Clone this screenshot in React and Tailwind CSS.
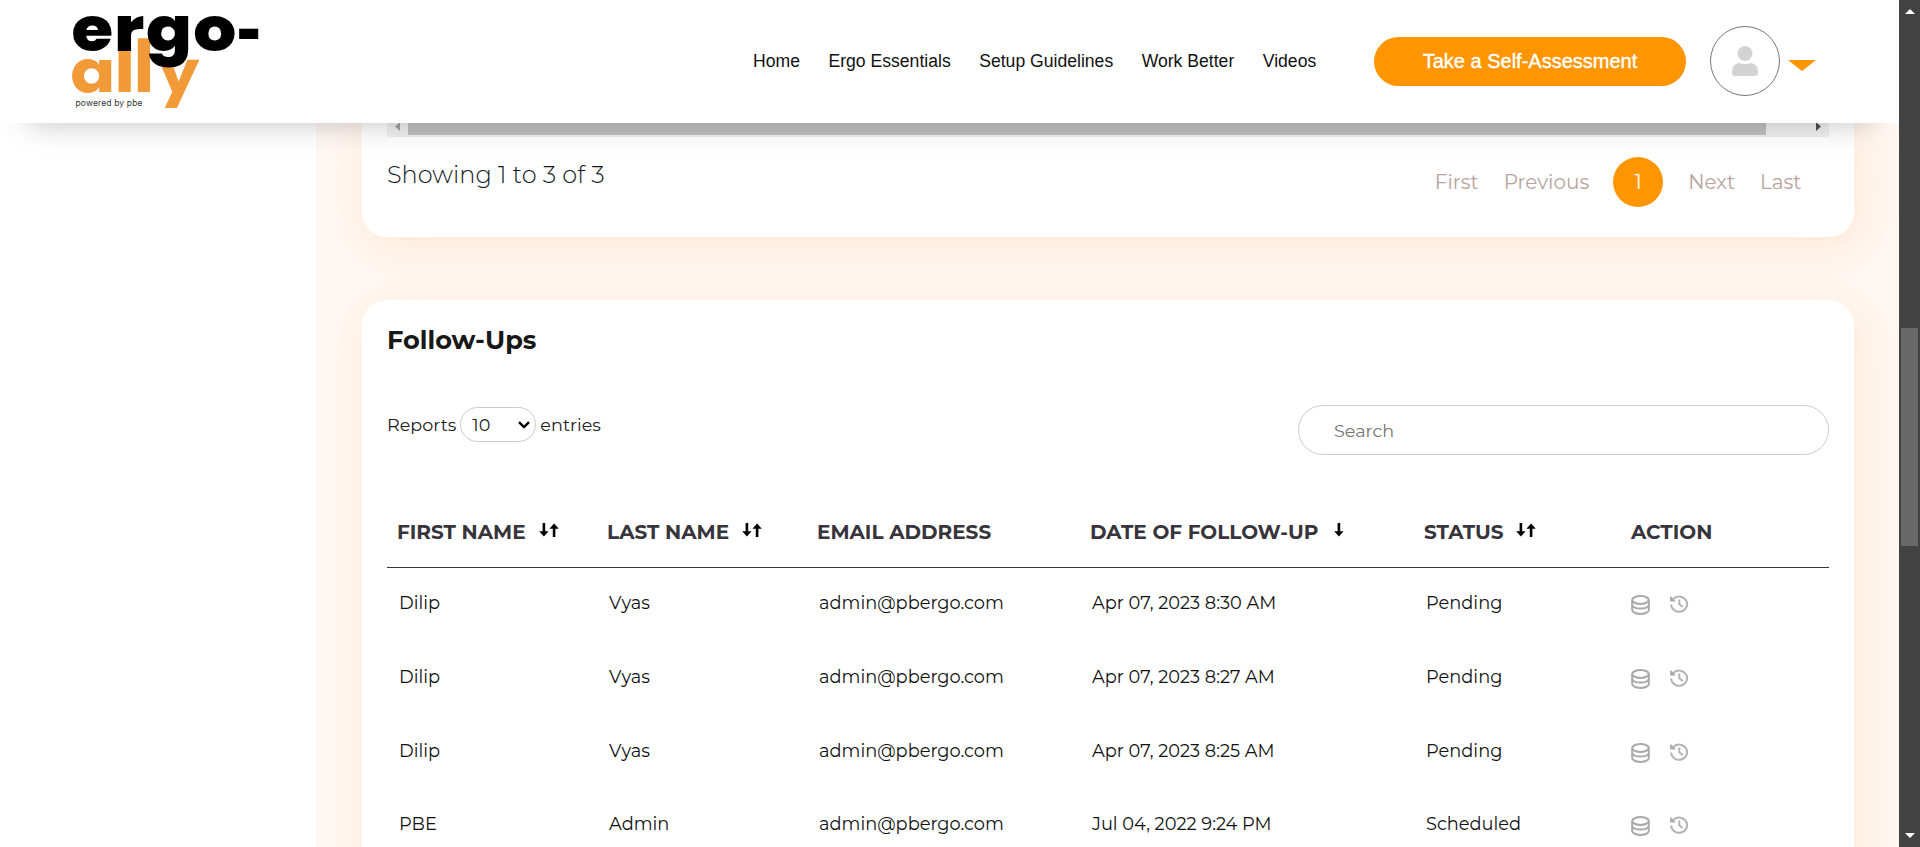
import React from "react";

const navItems = ["Home", "Ergo Essentials", "Setup Guidelines", "Work Better", "Videos"];

const columns = [
  { label: "FIRST NAME", sort: "both" },
  { label: "LAST NAME", sort: "both" },
  { label: "EMAIL ADDRESS" },
  { label: "DATE OF FOLLOW-UP", sort: "down" },
  { label: "STATUS", sort: "both" },
  { label: "ACTION" },
];

const rows = [
  ["Dilip", "Vyas", "admin@pbergo.com", "Apr 07, 2023 8:30 AM", "Pending"],
  ["Dilip", "Vyas", "admin@pbergo.com", "Apr 07, 2023 8:27 AM", "Pending"],
  ["Dilip", "Vyas", "admin@pbergo.com", "Apr 07, 2023 8:25 AM", "Pending"],
  ["PBE", "Admin", "admin@pbergo.com", "Jul 04, 2022 9:24 PM", "Scheduled"],
];

const grid = "grid grid-cols-[210px_210px_273px_334px_207px_208px]";

function Logo() {
  return (
    <svg className="block h-[121px] w-[270px] overflow-visible" viewBox="0 0 270 121">
      <text
        x="68.35 111.8 130.6 154.2"
        y="92"
        fontSize="77.5"
        fontWeight="700"
        fill="#f29a38"
        transform="scale(1.03 1)"
        fontFamily="'League Spartan', Poppins, sans-serif"
      >
        ally
      </text>
      <text
        x="65.55 104.6 133.9 177.3"
        y="51"
        fontSize="62"
        fontWeight="800"
        fill="#000"
        transform="scale(1.09 1)"
        fontFamily="Poppins, Montserrat, sans-serif"
      >
        ergo<tspan x="215.8" y="48.7" fontSize="68" fontFamily="'League Spartan', Poppins, sans-serif">-</tspan>
      </text>
      <text x="75.5" y="105.7" fontSize="8.5" textLength="67" fill="#333" fontFamily="Inter, sans-serif">
        powered by pbe
      </text>
    </svg>
  );
}

function Header() {
  return (
    <header className="relative z-10 flex h-[123px] shrink-0 items-center bg-white pb-[2px] font-['Liberation_Sans',Arial,sans-serif] shadow-[0_28px_30px_-28px_rgba(0,0,0,0.25)]">
      <Logo />
      <nav className="ml-[483px] flex gap-[28.5px] text-[17.6px] leading-6 text-[#111]">
        {navItems.map((item) => (
          <a key={item} className="whitespace-nowrap">{item}</a>
        ))}
      </nav>
      <button className="mt-[2px] ml-auto h-[49px] w-[312px] shrink-0 rounded-full bg-[#ff9500] pb-[2px] text-xl text-white [-webkit-text-stroke:0.4px_#fff]">
        Take a Self-Assessment
      </button>
      <div className="ml-6 flex size-[70px] shrink-0 items-center justify-center rounded-full border border-[#777]">
        <svg className="h-[30px] w-[26px]" viewBox="0 0 26 30" fill="#d3d3d3">
          <circle cx="13" cy="7.5" r="7.5" />
          <path d="M7 17q6 2 12 0q7 1 7 9v1q0 3-3 3H3q-3 0-3-3v-1q0-8 7-9z" />
        </svg>
      </div>
      <svg className="mt-[10px] mr-[83px] ml-2 h-[11px] w-7 shrink-0" viewBox="0 0 28 11">
        <path d="M0 0h28L14 11z" fill="#ff9500" />
      </svg>
    </header>
  );
}

function SortIcon({ type }) {
  return (
    <svg className={type === "both" ? "mb-1 ml-[13px] h-[14px] w-5" : "mb-1 ml-4 h-[14px] w-5"} viewBox="0 0 20 14">
      <path d="M3.6 0h2.6v8.2H9.6L4.9 13.6 0.2 8.2h3.4z" fill="#000" />
      {type === "both" && <path d="M13.8 14h2.6V5.8h3.4L15.1 0.4 10.4 5.8h3.4z" fill="#000" />}
    </svg>
  );
}

function DatabaseIcon() {
  return (
    <svg className="h-5 w-[19px]" viewBox="0 0 19 20" fill="none" stroke="#aaa" strokeWidth="2">
      <ellipse cx="9.5" cy="5" rx="8.3" ry="3.9" />
      <path d="M1.2 5v10c0 2.2 3.7 3.9 8.3 3.9s8.3-1.7 8.3-3.9V5" />
      <path d="M1.2 10c0 2 3.700 3.600 8.300 3.600s8.300-1.600 8.300-3.600" />
    </svg>
  );
}

function HistoryIcon() {
  return (
    <svg className="ml-5 h-[18px] w-[19px]" viewBox="0 0 19 18" fill="none" stroke="#b4b4b4" strokeWidth="2">
      <path d="M1.100 9.500a8 7.600 0 1 0 2.700-6L2 5" />
      <path d="M0.200 0.800v5.600h5.800z" fill="#aaa" stroke="none" />
      <path d="M9.300 4.600v4.600l3.400 2.800" />
    </svg>
  );
}

function Pagination() {
  return (
    <div className="flex items-center text-[20px] text-[#b8a3a0]">
      <a className="mr-[25px]">First</a>
      <a className="mr-6">Previous</a>
      <a className="mr-[25px] flex size-[50px] items-center justify-center rounded-full bg-[#ff9500] text-white">1</a>
      <a className="mr-[25px]">Next</a>
      <a>Last</a>
    </div>
  );
}

function ReportsCard() {
  return (
    <section className="h-[114px] rounded-b-[25px] bg-white px-[25px] shadow-[6px_10px_40px_rgba(255,160,50,0.16)]">
      <div className="flex h-[14px] bg-[#f1f1f1] pb-[2px]">
        <svg className="h-3 w-[21px]" viewBox="0 0 21 12"><path d="M13 0v8L8 3.500 12 0z" fill="#a3a3a3" /></svg>
        <div className="w-[1358px] bg-[#c1c1c1]" />
        <svg className="ml-auto h-3 w-[21px]" viewBox="0 0 21 12"><path d="M8 0v8L13 3.500 9 0z" fill="#505050" /></svg>
      </div>
      <div className="flex justify-between pr-[27.5px]">
        <p className="pt-[19px] text-2xl leading-[37px] font-light text-[#15191d]">Showing 1 to 3 of 3</p>
        <div className="pt-5"><Pagination /></div>
      </div>
    </section>
  );
}

function FollowUpsCard() {
  return (
    <section className="mt-[63px] h-[620px] rounded-t-[25px] bg-white px-[25px] shadow-[6px_10px_40px_rgba(255,160,50,0.16)]">
      <h2 className="pt-[22px] text-[25.6px] leading-9 font-bold text-[#181818]">Follow-Ups</h2>
      <div className="mt-[47px] flex h-[50px] items-start justify-between">
        <div className="mt-[2px] flex items-center text-[17.6px] text-[#222]">
          <span className="pt-px">Reports</span>
          <span className="mr-1 ml-[4px] flex h-[35px] w-[76px] items-center justify-between rounded-full border border-[#ccc] pr-[5px] pl-[11px]">
            <span className="pt-px">10</span>
            <svg className="h-2 w-3" viewBox="0 0 12 8" fill="none" stroke="#000" strokeWidth="2.400"><path d="M1 1.200l5 4.800 5-4.800" /></svg>
          </span>
          <span className="pt-px">entries</span>
        </div>
        <input
          placeholder="Search"
          className="h-[50px] w-[531px] rounded-full border border-[#ccc] px-[35px] text-[17.6px] placeholder:text-[#757575]"
        />
      </div>
      <div className={`${grid} mt-[45px] h-[68px] border-b border-[#38343c]`}>
        {columns.map((col) => (
          <div key={col.label} className="flex h-[64px] items-center pl-[10px] text-xl font-bold whitespace-nowrap text-[#38343c]">
            {col.label}
            {col.sort && <SortIcon type={col.sort} />}
          </div>
        ))}
      </div>
      {rows.map((row, i) => (
        <div key={i} className={`${grid} h-[73.8px] text-[17.8px] text-[#111]`}>
          {row.map((cell, j) => (
            <div key={j} className="pt-[21px] pl-3 leading-7 whitespace-nowrap">{cell}</div>
          ))}
          <div className="flex items-start pt-[27px] pl-[10px]">
            <DatabaseIcon />
            <HistoryIcon />
          </div>
        </div>
      ))}
    </section>
  );
}

function PageScrollbar() {
  return (
    <div className="flex w-[21px] shrink-0 flex-col items-center bg-[#424242] py-[9px]">
      <svg className="h-[5px] w-[10px]" viewBox="0 0 10 5"><path d="M0 5h10L5 0z" fill="#fff" /></svg>
      <div className="mt-[314px] mb-auto h-[218px] w-[17px] bg-[#686868]" />
      <svg className="h-[5px] w-[10px]" viewBox="0 0 10 5"><path d="M0 0h10L5 5z" fill="#fff" /></svg>
    </div>
  );
}

export default function App() {
  return (
    <div className="flex h-[847px] w-[1920px] overflow-hidden bg-white font-[Montserrat,Inter,sans-serif]">
      <div className="flex w-[1899px] shrink-0 flex-col overflow-hidden">
        <Header />
        <div className="flex h-[724px]">
          <aside className="w-[316px] shrink-0 bg-white" />
          <main className="w-[1583px] shrink-0 overflow-hidden bg-[#fff7f2] pr-[45px] pl-[46px]">
            <ReportsCard />
            <FollowUpsCard />
          </main>
        </div>
      </div>
      <PageScrollbar />
    </div>
  );
}
